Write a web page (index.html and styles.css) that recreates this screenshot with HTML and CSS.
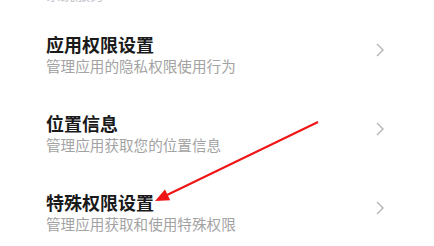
FILE: index.html
```html
<!DOCTYPE html>
<html lang="zh-CN">
<head>
    <meta charset="UTF-8">
    <meta name="viewport" content="width=device-width, initial-scale=1.0">
    <title>隐私保护</title>
    <link rel="stylesheet" href="styles.css">
</head>
<body>
    <div class="page">
        <div class="prev">
            <span class="desc">系统服务</span>
        </div>

        <div class="item">
            <div class="text">
                <div class="title">应用权限设置</div>
                <div class="desc">管理应用的隐私权限使用行为</div>
            </div>
            <svg class="chevron" width="10" height="14" viewBox="0 0 10 14">
                <polyline points="2,1 8,7 2,13" />
            </svg>
        </div>

        <div class="item">
            <div class="text">
                <div class="title">位置信息</div>
                <div class="desc">管理应用获取您的位置信息</div>
            </div>
            <svg class="chevron" width="10" height="14" viewBox="0 0 10 14">
                <polyline points="2,1 8,7 2,13" />
            </svg>
        </div>

        <div class="item">
            <div class="text">
                <div class="title">特殊权限设置</div>
                <div class="desc">管理应用获取和使用特殊权限</div>
            </div>
            <svg class="chevron" width="10" height="14" viewBox="0 0 10 14">
                <polyline points="2,1 8,7 2,13" />
            </svg>
        </div>

        <!-- annotation arrow drawn over the list -->
        <svg class="arrow" width="434" height="246" viewBox="0 0 434 246">
            <line x1="318" y1="122" x2="167" y2="195" />
            <polygon points="155,201 170.2,200.3 165,189.5" />
        </svg>
    </div>
</body>
</html>
```

FILE: styles.css
```css
body {
    margin: 0;
    background-color: #ffffff;
    font-family: "Noto Sans CJK SC", "Noto Sans", sans-serif;
}

.page {
    position: relative;
    width: 434px;
    height: 246px;
    overflow: hidden;
}

.prev {
    height: 14px;
    padding-left: 46px;
    display: flex;
    align-items: flex-end;
    overflow: hidden;
}

.prev .desc {
    margin-bottom: 11px;
    color: #c4c4cc;
}

.item {
    height: 79px;
    padding-left: 46px;
    padding-right: 49px;
    display: flex;
    align-items: center;
    justify-content: space-between;
}

.title {
    font-size: 18px;
    line-height: 24px;
    font-weight: bold;
    color: #1a1a1a;
}

.desc {
    font-size: 14.6px;
    line-height: 18px;
    margin-top: 1px;
    color: #a3a3a3;
    white-space: nowrap;
}

.chevron {
    margin-bottom: 8px;
}

.chevron polyline {
    fill: none;
    stroke: #b4b4b4;
    stroke-width: 1.4;
}

.arrow {
    position: absolute;
    left: 0;
    top: 0;
}

.arrow line {
    stroke: #f01414;
    stroke-width: 2;
}

.arrow polygon {
    fill: #f01414;
}
```
